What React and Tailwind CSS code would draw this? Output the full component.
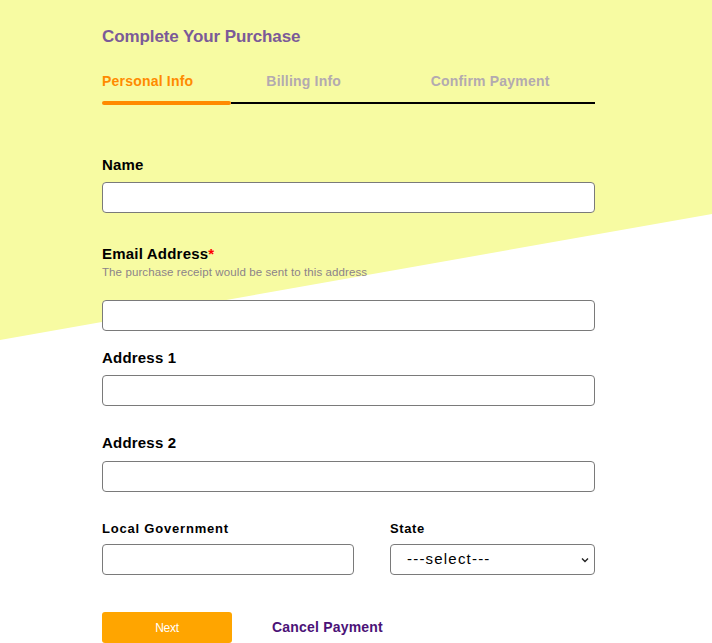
const font = { fontFamily: '"Liberation Sans", Arial, sans-serif' };

const Field = ({ label, className = '', children }) => (
  <div className={className}>
    <label className="block text-[15px] leading-[18px] font-bold text-black tracking-[0.2px]">{label}</label>
    {children}
  </div>
);

const inputCls =
  'block w-full h-[31px] bg-white border border-[#7a7a7a] rounded-[4px] px-2 text-[14px] outline-none';

export default function App() {
  return (
    <div className="relative w-[712px] h-[643px] overflow-hidden bg-white" style={font}>
      {/* angled yellow backdrop */}
      <div
        className="absolute inset-0 bg-[#f7fba2]"
        style={{ clipPath: 'polygon(0 0, 100% 0, 100% 214px, 0 340px)' }}
      />

      <div className="relative pl-[102px] pt-[27px] w-[595px]">
        <h2 className="text-[17px] leading-[20px] font-bold text-[#7b5a98] tracking-[-0.1px]">Complete Your Purchase</h2>

        <div className="mt-[25px] grid grid-cols-3 text-[14px] leading-[18px] font-bold tracking-[0.2px]">
          <span className="text-[#ff8a00]">Personal Info</span>
          <span className="text-[#b3aab0]">Billing Info</span>
          <span className="text-[#b3aab0]">Confirm Payment</span>
        </div>

        <div className="mt-[11px] flex items-center h-[4px]">
          <div className="w-[129px] h-[4px] rounded-full bg-[#ff8a00]" />
          <div className="flex-1 h-[2px] bg-black" />
        </div>

        <Field label="Name" className="mt-[51px]">
          <input className={`${inputCls} mt-[8px]`} />
        </Field>

        <div className="mt-[32px]">
          <label className="block text-[15px] leading-[18px] font-bold text-black tracking-[0.2px]">
            Email Address<span className="text-[#ff0000]">*</span>
          </label>
          <p className="text-[11.5px] leading-[13px] text-[#8c8389] mt-[3px] tracking-[0.1px]">
            The purchase receipt would be sent to this address
          </p>
          <input className={`${inputCls} mt-[21px]`} />
        </div>

        <Field label="Address 1" className="mt-[18px]">
          <input className={`${inputCls} mt-[8px]`} />
        </Field>

        <Field label="Address 2" className="mt-[28px]">
          <input className={`${inputCls} mt-[9px]`} />
        </Field>

        <div className="mt-[29px] flex gap-[36px]">
          <div className="w-[252px]">
            <label className="block text-[13px] leading-[16px] font-bold text-black tracking-[0.8px]">Local Government</label>
            <input className={`${inputCls} mt-[7px]`} />
          </div>
          <div className="flex-1">
            <label className="block text-[13px] leading-[16px] font-bold text-black tracking-[0.6px]">State</label>
            <div className="relative mt-[7px]">
              <select className="block w-full h-[31px] appearance-none bg-white border border-[#7a7a7a] rounded-[4px] pl-[16px] text-[15px] tracking-[1.2px] text-black outline-none">
                <option>---select---</option>
              </select>
              <svg
                className="absolute right-[6px] top-[13px] w-[8px] h-[6px] pointer-events-none"
                viewBox="0 0 8 6"
                fill="none"
                stroke="#222"
                strokeWidth="1.4"
              >
                <path d="M1 1.5l3 3 3-3" />
              </svg>
            </div>
          </div>
        </div>

        <div className="mt-[37px] flex items-center">
          <button className="w-[130px] h-[31px] bg-[#ffa500] rounded-[3px] text-white text-[12px] tracking-[-0.3px]">
            Next
          </button>
          <a className="ml-[40px] text-[14px] font-bold text-[#4b1277] tracking-[0.2px] cursor-pointer">Cancel Payment</a>
        </div>
      </div>
    </div>
  );
}
